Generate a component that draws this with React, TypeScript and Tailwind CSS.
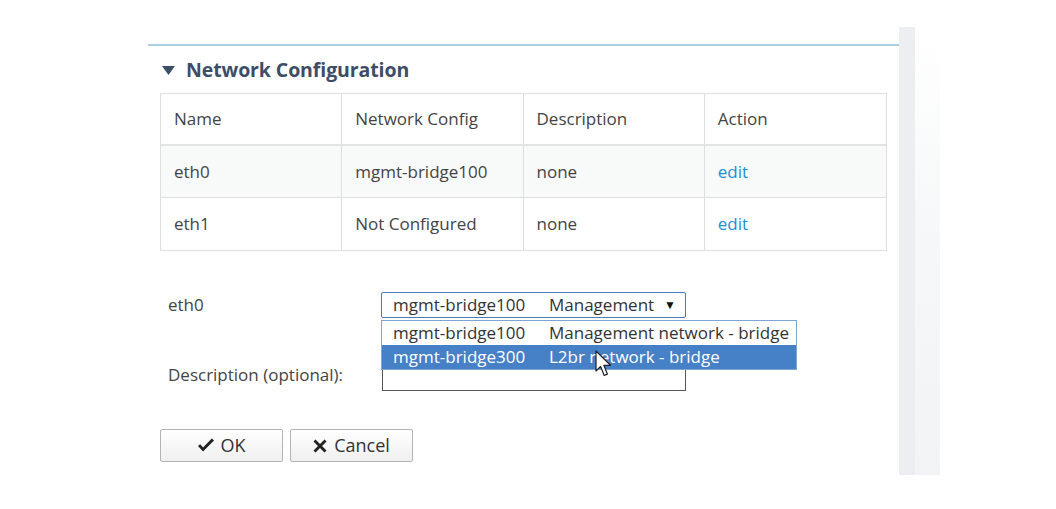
import React from 'react';

const rows = [
  { name: 'eth0', config: 'mgmt-bridge100', desc: 'none', shaded: true },
  { name: 'eth1', config: 'Not Configured', desc: 'none', shaded: false },
];

function Cell({ children, className = '' }: { children: React.ReactNode; className?: string }) {
  return <div className={`flex items-center pl-[13px] border-r border-[#dedede] last:border-r-0 ${className}`}>{children}</div>;
}

export default function App() {
  return (
    <div
      className="w-[1056px] h-[509px] bg-white flex pt-[27px] text-[#444] text-[17px]"
      style={{ fontFamily: '"Open Sans", "Noto Sans", sans-serif' }}
    >
      <div className="w-[148px] shrink-0" />
      <div className="w-[751px] shrink-0 flex flex-col">
        <div className="h-[17px]" />
        <div className="h-[2px] bg-[#aad0e1]" />

        <div className="flex items-center h-[47px] pl-[14px]">
          <svg width="13" height="9" viewBox="0 0 13 9" className="mr-[11px] mt-[1px]">
            <path d="M0 0 L13 0 L6.5 9 Z" fill="#3d4d66" />
          </svg>
          <span className="text-[#3d4d66] text-[19.5px] font-bold tracking-[-0.1px]">Network Configuration</span>
        </div>

        <div className="ml-[12px] w-[727px] border border-[#dedede]">
          <div className="grid grid-cols-4 h-[52px] border-b-2 border-[#e3e3e3] bg-white">
            <Cell>Name</Cell>
            <Cell>Network Config</Cell>
            <Cell>Description</Cell>
            <Cell>Action</Cell>
          </div>
          {rows.map((r, i) => (
            <div
              key={r.name}
              className={`grid grid-cols-4 h-[52px] ${i === 0 ? 'border-b border-[#dedede]' : ''} ${r.shaded ? 'bg-[#f8f9f9]' : 'bg-white'}`}
            >
              <Cell>{r.name}</Cell>
              <Cell>{r.config}</Cell>
              <Cell>{r.desc}</Cell>
              <Cell>
                <span className="text-[#1d8fcf]">edit</span>
              </Cell>
            </div>
          ))}
        </div>

        <div className="mt-[41px] ml-[20px] flex">
          <div className="w-[213px] flex flex-col">
            <div className="h-[26px] flex items-center">eth0</div>
            <div className="h-[70px] flex items-end pb-[1px]">Description (optional):</div>
          </div>
          <div className="relative">
            <div className="w-[305px] h-[26px] border border-[#4d7cba] rounded-[2px] flex items-center pl-[11px] pr-[9px] text-[#333]">
              <span className="w-[156px]">mgmt-bridge100</span>
              <span className="flex-1">Management</span>
              <span className="text-[12px] text-[#111]">▼</span>
            </div>
            <div className="mt-[51px] ml-[1px] w-[304px] h-[22px] border border-[#555]" />

            <div className="absolute left-0 top-[28px] w-[416px] border border-[#7fa4d6] bg-white z-10">
              <div className="h-[24px] flex items-center pl-[11px] text-[#333]">
                <span className="w-[156px]">mgmt-bridge100</span>
                <span>Management network - bridge</span>
              </div>
              <div className="h-[24px] flex items-center pl-[11px] bg-[#4680c6] text-white">
                <span className="w-[156px]">mgmt-bridge300</span>
                <span>L2br network - bridge</span>
              </div>
            </div>

            <svg
              className="absolute left-[214px] top-[58px] z-20"
              width="18"
              height="28"
              viewBox="0 0 18 28"
            >
              <path
                d="M1 1 L1 21 L5.6 16.4 L9.2 25.5 L12.4 24.1 L8.8 15.3 L15.5 15.3 Z"
                fill="white"
                stroke="#222"
                strokeWidth="1.2"
                strokeLinejoin="round"
              />
            </svg>
          </div>
        </div>

        <div className="mt-[38px] ml-[12px] flex gap-[7px]">
          <button className="w-[123px] h-[33px] border border-[#b3b3b3] rounded-[2px] bg-gradient-to-b from-white to-[#efefef] flex items-center justify-center gap-[5px] text-[#333] text-[18px]">
            <svg width="18" height="15" viewBox="0 0 18 15">
              <path d="M1 8 L6 13.5 L17 2.5 L14.8 0.6 L6 9.4 L3.2 6.2 Z" fill="#222" />
            </svg>
            OK
          </button>
          <button className="w-[123px] h-[33px] border border-[#b3b3b3] rounded-[2px] bg-gradient-to-b from-white to-[#efefef] flex items-center justify-center gap-[7px] text-[#333] text-[18px]">
            <svg width="14" height="14" viewBox="0 0 14 14">
              <path d="M2.5 0.5 L7 5 L11.5 0.5 L13.5 2.5 L9 7 L13.5 11.5 L11.5 13.5 L7 9 L2.5 13.5 L0.5 11.5 L5 7 L0.5 2.5 Z" fill="#222" />
            </svg>
            Cancel
          </button>
        </div>
      </div>
      <div className="w-[41px] h-[448px] flex">
        <div className="w-[16px] h-full bg-[#eceef2]" />
        <div className="flex-1 h-full bg-gradient-to-b from-white via-[#f5f7f8] to-[#f1f3f5]" />
      </div>
    </div>
  );
}
